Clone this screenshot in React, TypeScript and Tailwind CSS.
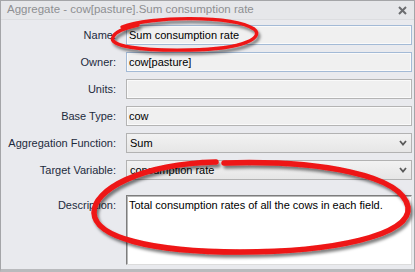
import { ReactNode } from 'react';

const font = { fontFamily: '"Liberation Sans", Arial, sans-serif' };

function Row({ label, children, top = false }: { label: string; children: ReactNode; top?: boolean }) {
  return (
    <div className={`flex gap-[10px] ${top ? 'items-start' : 'items-center'}`}>
      <div
        className={`w-[113px] shrink-0 text-right text-[11px] leading-[13px] text-[#1d2a3d] ${top ? 'pt-[4px]' : ''}`}
      >
        {label}
      </div>
      {children}
    </div>
  );
}

function TextBox({ value, blue = false }: { value?: string; blue?: boolean }) {
  return (
    <div
      className={`flex h-[20px] flex-1 items-center border bg-[#f0f0f0] pl-[2px] text-[11px] text-black shadow-[inset_0_0_0_1px_#fafafa] ${
        blue ? 'border-[#a3bad6]' : 'border-[#b4b4b4]'
      }`}
    >
      {value}
    </div>
  );
}

function Combo({ value }: { value: string }) {
  return (
    <div className="flex h-[20px] flex-1 items-center justify-between border border-[#b2b2b2] bg-gradient-to-b from-[#f2f2f2] to-[#e6e6e6] pl-[3px] pr-[4px] text-[11px] text-black">
      <span>{value}</span>
      <svg width="8" height="6" viewBox="0 0 8 6">
        <polyline points="1,1 4,4.5 7,1" fill="none" stroke="#5a5a5a" strokeWidth="1.8" />
      </svg>
    </div>
  );
}

export default function App() {
  return (
    <div className="relative h-[272px] w-[415px] overflow-hidden bg-[#e7e8eb]" style={font}>
      <div className="flex h-full flex-col border border-b-[3px] border-[#a4a5a8] border-b-[#b9babd]">
        {/* Title bar */}
        <div className="flex h-[18px] shrink-0 items-center justify-between bg-[#e6e7ea] pl-[6px] pr-[7px]">
          <span className="text-[11.5px] text-[#8e8f92]">Aggregate - cow[pasture].Sum consumption rate</span>
          <svg width="9" height="9" viewBox="0 0 9 9">
            <path d="M1 1 L8 8 M8 1 L1 8" stroke="#6c6d70" strokeWidth="2" />
          </svg>
        </div>

        {/* Body */}
        <div className="flex flex-1 flex-col gap-[7px] border-t border-[#dcdde0] bg-[#e9eaee] pl-[2px] pr-[2px] pt-[5px]">
          <Row label="Name:">
            <TextBox value="Sum consumption rate" blue />
          </Row>
          <Row label="Owner:">
            <TextBox value="cow[pasture]" blue />
          </Row>
          <Row label="Units:">
            <TextBox />
          </Row>
          <Row label="Base Type:">
            <TextBox value="cow" />
          </Row>
          <Row label="Aggregation Function:">
            <Combo value="Sum" />
          </Row>
          <Row label="Target Variable:">
            <Combo value="consumption rate" />
          </Row>
          <div className="mt-[8px]">
            <Row label="Description:" top>
              <div className="h-[70px] flex-1 border border-t-[#7d7d7d] border-l-[#7d7d7d] border-r-[#dcdcdc] border-b-[#dcdcdc] bg-white pl-[2px] pt-[3px] text-[11px] leading-[13px] text-black shadow-[inset_1px_1px_0_#b8b8b8]">
                Total consumption rates of all the cows in each field.
              </div>
            </Row>
          </div>
        </div>
      </div>

      {/* Red hand-drawn highlights */}
      <svg className="pointer-events-none absolute left-0 top-0" width="415" height="272" viewBox="0 0 415 272">
        <defs>
          <filter id="sh" x="-10%" y="-20%" width="130%" height="150%">
            <feDropShadow dx="2" dy="3" stdDeviation="1.6" floodColor="#000" floodOpacity="0.5" />
          </filter>
        </defs>
        <g filter="url(#sh)" fill="none" stroke="#ee1515" strokeLinecap="round">
          <path
            d="M122 27 C150 16, 232 15, 254 29 C264 37, 246 49, 190 50 C140 51, 108 46, 113 37 C115 32, 124 28, 138 25"
            strokeWidth="3.4"
          />
          <path
            d="M224 163 C320 160, 402 175, 408 207 C412 236, 330 252, 240 252 C150 252, 95 237, 94 213 C93 190, 140 164, 216 162"
            strokeWidth="5.5"
          />
        </g>
      </svg>
    </div>
  );
}
